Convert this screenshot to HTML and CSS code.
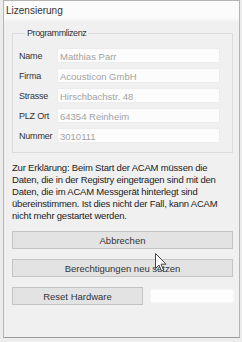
FILE: index.html
```html
<!DOCTYPE html>
<html lang="de">
<head>
	<meta charset="UTF-8">
	<title>Lizensierung</title>
	<link rel="stylesheet" href="styles.css">
</head>
<body>
	<div class="window">
		<div class="titlebar">Lizensierung</div>
		<div class="content">
			<fieldset class="group">
				<legend>Programmlizenz</legend>
				<div class="row"><span class="label">Name</span><span class="field">Matthias Parr</span></div>
				<div class="row"><span class="label">Firma</span><span class="field">Acousticon GmbH</span></div>
				<div class="row"><span class="label">Strasse</span><span class="field">Hirschbachstr. 48</span></div>
				<div class="row"><span class="label">PLZ Ort</span><span class="field">64354 Reinheim</span></div>
				<div class="row"><span class="label">Nummer</span><span class="field">3010111</span></div>
			</fieldset>
			<p class="note">Zur Erklärung: Beim Start der ACAM müssen die<br>Daten, die in der Registry eingetragen sind mit den<br>Daten, die im ACAM Messgerät hinterlegt sind<br>übereinstimmen. Ist dies nicht der Fall, kann ACAM<br>nicht mehr gestartet werden.</p>
			<div class="buttons">
				<button class="btn">Abbrechen</button>
				<button class="btn">Berechtigungen neu setzen</button>
				<div class="lastrow">
					<button class="btn small">Reset Hardware</button>
					<div class="blank"></div>
				</div>
			</div>
		</div>
		<svg class="cursor" width="12" height="19" viewBox="0 0 12 19">
			<path d="M0.5 0.5 L0.5 15.5 L4 12 L6.5 18 L8.5 17 L6 11.2 L11 11.2 Z" fill="#fff" stroke="#444" stroke-width="1" stroke-linejoin="round"/>
		</svg>
	</div>
</body>
</html>
```

FILE: styles.css
```css
*{
	margin: 0;
	padding: 0;
	box-sizing: border-box;
}
html, body{
	background: #ececec;
}
body{
	font-family: "Liberation Sans", Arial, sans-serif;
	font-size: 9.5px;
	color: #262626;
}
.window{
	position: relative;
	margin-left: 3px;
	width: 237px;
	height: 338px;
	border: 1px solid #b4b4b4;
	border-bottom-color: #999;
	background: #f0f0f0;
	display: flex;
	flex-direction: column;
}
.titlebar{
	height: 20px;
	padding: 4px 0 0 2px;
	font-size: 10px;
	color: #333;
	background: linear-gradient(#fbfbfb, #fbfbfb 80%, #f3f3f3);
}
.content{
	padding: 7px 6px 0 8px;
	display: flex;
	flex-direction: column;
}
.group{
	border: 1px solid #dcdcdc;
	padding: 10px 12px 9px 6px;
	display: flex;
	flex-direction: column;
	gap: 5px;
}
.group legend{
	margin-left: 6px;
	padding: 0 2px;
	font-size: 9px;
	letter-spacing: -0.4px;
	color: #333;
}
.row{
	display: flex;
	align-items: center;
}
.label{
	width: 38px;
	font-size: 9px;
	letter-spacing: -0.2px;
	color: #333;
}
.field{
	flex: 1;
	height: 15px;
	padding: 2px 0 0 2px;
	background: #fcfcfc;
	border: 1px solid #ececec;
	color: #a3a3a3;
	white-space: nowrap;
}
.note{
	margin-top: 9px;
	line-height: 12px;
	letter-spacing: -0.2px;
	white-space: nowrap;
	color: #222;
}
.buttons{
	margin-top: 9px;
	display: flex;
	flex-direction: column;
	gap: 10px;
}
.btn{
	height: 18px;
	font-family: inherit;
	font-size: 9.5px;
	color: #333;
	background: #e3e3e3;
	border: 1px solid #c3c3c3;
}
.lastrow{
	display: flex;
	align-items: center;
	gap: 8px;
}
.small{
	width: 131px;
}
.blank{
	flex: 1;
	height: 12px;
	background: #fdfdfd;
	box-shadow: 0 0 3px #fdfdfd;
}
.cursor{
	position: absolute;
	left: 151px;
	top: 252px;
}
```
